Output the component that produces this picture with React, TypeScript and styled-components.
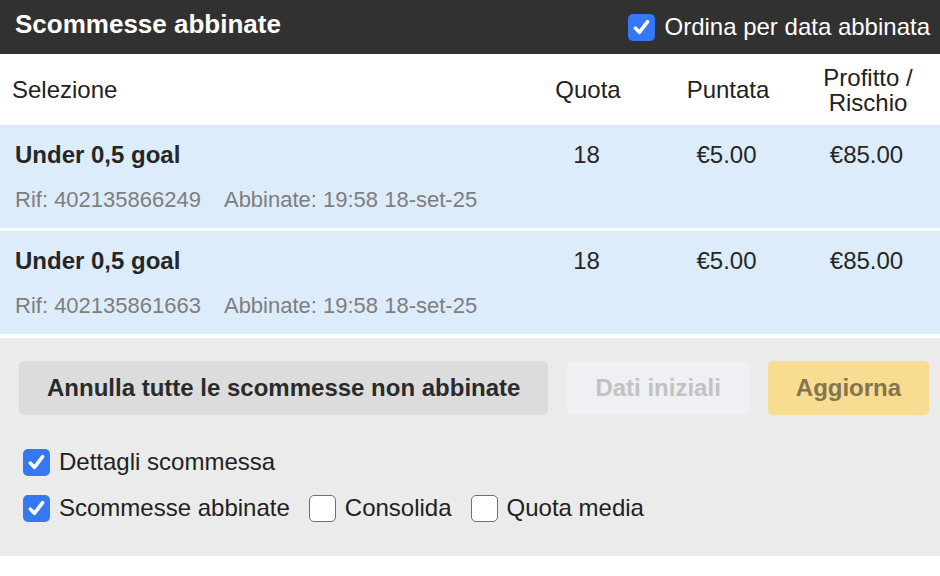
import React from 'react'
import styled, { createGlobalStyle } from 'styled-components'

const GlobalStyle = createGlobalStyle`
  html, body {
    margin: 0;
    padding: 0;
    background: #ffffff;
    font-family: "Liberation Sans", Arial, sans-serif;
  }
`

const Panel = styled.div`
  width: 940px;
  display: flex;
  flex-direction: column;
`

const Header = styled.header`
  display: flex;
  justify-content: space-between;
  align-items: center;
  height: 54px;
  padding: 0 10px 0 15px;
  background: #313131;
  color: #ffffff;
  box-sizing: border-box;
`

const Title = styled.h1`
  margin: 0 0 6px;
  font-size: 26px;
  font-weight: bold;
`

const Toggle = styled.label<{ $light?: boolean }>`
  display: flex;
  align-items: center;
  gap: 9px;
  font-size: 24px;
  color: ${(p) => (p.$light ? '#ffffff' : '#222222')};
`

const Box = styled.span<{ $checked?: boolean }>`
  display: inline-flex;
  align-items: center;
  justify-content: center;
  flex: none;
  width: 27px;
  height: 27px;
  box-sizing: border-box;
  border-radius: 5px;
  background: ${(p) => (p.$checked ? '#3478f6' : '#ffffff')};
  border: ${(p) => (p.$checked ? 'none' : '1.5px solid #6f6f6f')};
`

const Grid = styled.div`
  display: grid;
  grid-template-columns: 1fr 140px 140px 140px;
  padding: 0 2px 0 15px;
`

const ColumnHead = styled(Grid)`
  height: 71px;
  align-items: center;
  padding-left: 12px;
  font-size: 24px;
  color: #222222;
  background: #ffffff;
`

const HeadCell = styled.div<{ $center?: boolean }>`
  text-align: ${(p) => (p.$center ? 'center' : 'left')};
  line-height: 25px;
`

const BetRow = styled(Grid)`
  height: 103px;
  background: #ddecfb;
  align-content: start;
  padding-top: 16px;
  box-sizing: border-box;
  & + & {
    margin-top: 3px;
  }
`

const BetName = styled.div`
  font-size: 24px;
  font-weight: bold;
  color: #262626;
  line-height: 28px;
`

const Value = styled.div`
  font-size: 24px;
  color: #262626;
  text-align: center;
  line-height: 28px;
  margin-left: -3px;
`

const Meta = styled.div`
  grid-column: 1 / -1;
  margin-top: 17px;
  display: flex;
  gap: 23px;
  font-size: 22px;
  color: #7e7e7e;
  line-height: 28px;
`

const Footer = styled.div`
  margin-top: 4px;
  height: 218px;
  background: #ebebeb;
  padding: 23px 8px 0 19px;
  box-sizing: border-box;
  display: flex;
  flex-direction: column;
`

const Actions = styled.div`
  display: flex;
  gap: 19px;
`

const Button = styled.button<{ $variant: 'grey' | 'disabled' | 'yellow' }>`
  flex: none;
  height: 54px;
  padding: 0 28px;
  border: none;
  border-radius: 5px;
  white-space: nowrap;
  font-family: inherit;
  font-size: 24px;
  font-weight: bold;
  background: ${(p) =>
    p.$variant === 'grey' ? '#dcdcdc' : p.$variant === 'disabled' ? '#eff0f3' : '#f8dc92'};
  color: ${(p) =>
    p.$variant === 'grey' ? '#2a2a2a' : p.$variant === 'disabled' ? '#c2c2c2' : '#84744f'};
`

const Options = styled.div`
  display: flex;
  flex-direction: column;
  gap: 18px;
  margin-top: 33px;
  padding-left: 4px;
`

const OptionLine = styled.div`
  display: flex;
  gap: 19px;
`

const Check = () => (
  <svg width="19" height="19" viewBox="0 0 18 18">
    <path d="M3.2 9.6 L7 13.6 L14.8 3.4" fill="none" stroke="#ffffff" strokeWidth="3.4" strokeLinecap="round" strokeLinejoin="round" />
  </svg>
)

const Option = ({ label, checked, light }: { label: string; checked?: boolean; light?: boolean }) => (
  <Toggle $light={light}>
    <Box $checked={checked}>{checked && <Check />}</Box>
    {label}
  </Toggle>
)

const bets = [
  { ref: '402135866249', matched: '19:58 18-set-25' },
  { ref: '402135861663', matched: '19:58 18-set-25' },
]

export default function App() {
  return (
    <Panel>
      <GlobalStyle />
      <Header>
        <Title>Scommesse abbinate</Title>
        <Option label="Ordina per data abbinata" checked light />
      </Header>
      <ColumnHead>
        <HeadCell>Selezione</HeadCell>
        <HeadCell $center>Quota</HeadCell>
        <HeadCell $center>Puntata</HeadCell>
        <HeadCell $center>
          Profitto /<br />
          Rischio
        </HeadCell>
      </ColumnHead>
      {bets.map((b) => (
        <BetRow key={b.ref}>
          <BetName>Under 0,5 goal</BetName>
          <Value>18</Value>
          <Value>€5.00</Value>
          <Value>€85.00</Value>
          <Meta>
            <span>Rif: {b.ref}</span>
            <span>Abbinate: {b.matched}</span>
          </Meta>
        </BetRow>
      ))}
      <Footer>
        <Actions>
          <Button $variant="grey">Annulla tutte le scommesse non abbinate</Button>
          <Button $variant="disabled">Dati iniziali</Button>
          <Button $variant="yellow">Aggiorna</Button>
        </Actions>
        <Options>
          <Option label="Dettagli scommessa" checked />
          <OptionLine>
            <Option label="Scommesse abbinate" checked />
            <Option label="Consolida" />
            <Option label="Quota media" />
          </OptionLine>
        </Options>
      </Footer>
    </Panel>
  )
}
